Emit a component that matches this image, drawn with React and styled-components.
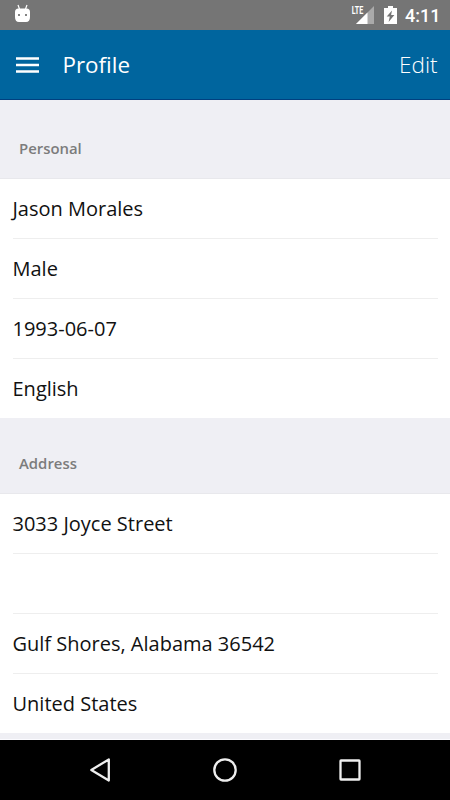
import React from "react";
import styled, { createGlobalStyle } from "styled-components";

const Global = createGlobalStyle`
  * { box-sizing: border-box; }
  body { margin: 0; background: #efeff4; }
`;
const Screen = styled.main`
  width: 450px; height: 800px; display: flex; flex-direction: column;
  overflow: hidden; background: #efeff4; font-family: "Open Sans", sans-serif;
`;
const StatusBar = styled.div`
  height: 30px; flex: none; background: #757575; color: #fff;
  display: flex; align-items: center; padding: 0 10px 0 14px;
  svg { display: block; }
`;
const StatusIcons = styled.div`
  margin-left: auto; display: flex; align-items: center; height: 30px;
`;
const Clock = styled.span`
  width: 35px; font: 500 18px/30px Roboto, sans-serif; white-space: nowrap;
  padding-top: 1px;
`;
const Header = styled.header`
  height: 70px; flex: none; background: #00659e; color: #fff;
  display: flex; align-items: center; padding: 0 12.5px 0 16px;
  border-bottom: 1px solid #004080;
`;
const Title = styled.h1`
  margin: 0 0 0 22.5px; font-size: 22.4px; font-weight: 400; line-height: 30px;
`;
const EditButton = styled.button`
  margin-left: auto; padding: 0; border: 0; background: none; color: #fff;
  font: 300 22.5px/30px "Open Sans", sans-serif;
`;
const SectionTitle = styled.h2`
  margin: 0; height: ${p => p.$height}px; flex: none; display: flex; align-items: flex-end;
  padding: 0 19px 19px; border-bottom: 1px solid #e8e8ec;
  font-size: 14.9px; line-height: 22px; font-weight: 600; color: #7c7c7c;
`;
const List = styled.ul`
  margin: 0; padding: 0 12px 0 12.5px; list-style: none; background: #fff; flex: none;
`;
const Row = styled.li`
  height: 60px; display: flex; align-items: center; font-size: 20px; font-weight: 400; color: #111;
  border-bottom: 1px solid #eee;
  &:last-child { height: 59px; border-bottom: 0; }
`;
const NavBar = styled.nav`
  margin-top: auto; height: 61px; flex: none; background: #000; border-top: 1px solid #fbfbff;
  display: flex; align-items: center; justify-content: center; gap: 95px;
`;

export default function App() {
  return <Screen><Global />
    <StatusBar>
      <svg width="17" height="30" viewBox="0 0 17 30">
        <path d="M4 5l1.5 4M13 5l-1.5 4" stroke="#fff" strokeWidth="1.2" />
        <path fillRule="evenodd" d="M1 12Q1 8.5 4.5 8.5h8Q16 8.5 16 12v5q0 5-4 5H5q-4 0-4-5zM4.1 14.1v1.8h1.8v-1.8zM11.1 14.1v1.8h1.8v-1.8z" fill="#fff" />
      </svg>
      <StatusIcons>
        <svg width="54" height="30" viewBox="0 0 54 30">
          <path d="M23 6v18H5z" fill="#aaa" /><path d="M16.5 12.5V24H5z" fill="#fff" />
          <path d="M37 6h5v2h4v16H33V8h4z" fill="#fff" /><path d="M41 10.5L35.7 16.5h3.1l-1.2 5.5 5.8-7h-3.3z" fill="#757575" />
          <text x="0.7" y="13.8" fill="#fff" stroke="#757575" strokeWidth="2" paintOrder="stroke" fontFamily="Roboto" fontSize="10.8" fontWeight="700" textLength="11.5" lengthAdjust="spacingAndGlyphs">LTE</text>
        </svg>
        <Clock>4:11</Clock>
      </StatusIcons>
    </StatusBar>
    <Header>
      <svg width="24" height="16" viewBox="0 0 24 16"><path d="M0 1.5h23M0 8h23M0 14.5h23" stroke="#fff" strokeWidth="2.6" /></svg>
      <Title>Profile</Title><EditButton>Edit</EditButton>
    </Header>
    <SectionTitle $height={79}>Personal</SectionTitle>
    <List><Row>Jason Morales</Row><Row>Male</Row><Row>1993-06-07</Row><Row>English</Row></List>
    <SectionTitle $height={76}>Address</SectionTitle>
    <List><Row>3033 Joyce Street</Row><Row /><Row>Gulf Shores, Alabama 36542</Row><Row>United States</Row></List>
    <NavBar>
      <svg width="30" height="30" viewBox="0 0 30 30"><path d="M23.8 4.4v21.2L6.3 15z" fill="none" stroke="#eee" strokeWidth="2.3" strokeLinejoin="round" /></svg>
      <svg width="30" height="30" viewBox="0 0 30 30"><circle cx="15" cy="15" r="10.7" fill="none" stroke="#eee" strokeWidth="2.3" /></svg>
      <svg width="30" height="30" viewBox="0 0 30 30"><rect x="5.5" y="5.5" width="19" height="19" rx=".5" fill="none" stroke="#eee" strokeWidth="2.3" /></svg>
    </NavBar>
  </Screen>;
}
